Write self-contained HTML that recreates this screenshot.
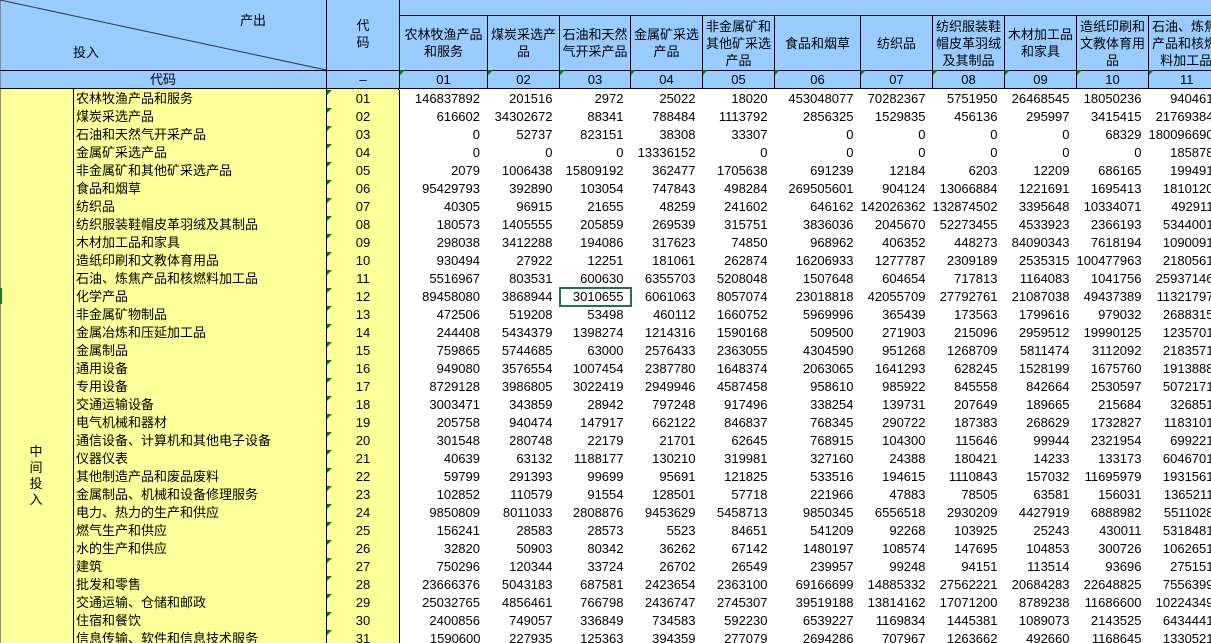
<!DOCTYPE html>
<html><head><meta charset="utf-8"><style>
html,body{margin:0;padding:0;width:1211px;height:643px;overflow:hidden;background:#fff;position:relative;font-family:"Liberation Sans","Noto Sans CJK SC",sans-serif;font-size:13px;color:#000}
.a{position:absolute;box-sizing:border-box}
.hd{background:#99ccff}
.hc{position:absolute;top:16px;height:54px;display:flex;align-items:center;justify-content:center;text-align:center;line-height:17px;border-left:1px solid #000;box-sizing:border-box;overflow:hidden;white-space:nowrap}
.cc{position:absolute;top:70px;height:19px;line-height:19px;text-align:center;border-left:1px solid #000;box-sizing:border-box}
.tri{position:absolute;left:0;top:0;width:0;height:0;border-top:5px solid #0a7a0a;border-right:5px solid transparent}
.clip{position:absolute;left:73px;top:90px;width:1138px;height:553px;overflow:hidden}
table{position:absolute;left:0;top:0;width:1147px;border-collapse:collapse;table-layout:fixed}
td{height:18px;padding:0;white-space:nowrap;overflow:hidden;line-height:18px}
td.n{background:#ffff99;padding-left:2px;border-left:1px solid #000}
td.c{background:#ffff99;text-align:center;border-left:1px solid #000;border-right:1px solid #000;position:relative}
td.d{text-align:right;padding-right:7px}
</style></head><body>
<div class="a hd" style="left:0;top:0;width:1211px;height:89px"></div>
<div class="a" style="left:0;top:0;width:1px;height:643px;background:#888"></div>
<svg class="a" style="left:0;top:0" width="330" height="72"><line x1="0" y1="0" x2="326" y2="70" stroke="#333" stroke-width="1"/></svg>
<div class="a" style="left:240px;top:10px">产出</div>
<div class="a" style="left:73px;top:42px">投入</div>
<div class="a" style="left:326px;top:0;width:73px;height:70px;border-left:1px solid #000;text-align:center;padding-top:17px;line-height:17px">代<br>码</div>
<div class="a" style="left:399px;top:0;width:812px;height:16px;border-left:1px solid #000;border-bottom:1px solid #000"></div>
<div class="hc" style="left:399px;width:88px">农林牧渔产品<br>和服务</div>
<div class="hc" style="left:487px;width:72px">煤炭采选产<br>品</div>
<div class="hc" style="left:559px;width:71px">石油和天然<br>气开采产品</div>
<div class="hc" style="left:630px;width:72px">金属矿采选<br>产品</div>
<div class="hc" style="left:702px;width:72px">非金属矿和<br>其他矿采选<br>产品</div>
<div class="hc" style="left:774px;width:86px">食品和烟草</div>
<div class="hc" style="left:860px;width:72px">纺织品</div>
<div class="hc" style="left:932px;width:72px">纺织服装鞋<br>帽皮革羽绒<br>及其制品</div>
<div class="hc" style="left:1004px;width:72px">木材加工品<br>和家具</div>
<div class="hc" style="left:1076px;width:72px">造纸印刷和<br>文教体育用<br>品</div>
<div class="hc" style="left:1148px;width:63px;justify-content:flex-start;padding-left:3px">石油、炼焦<br>产品和核燃<br>&nbsp;料加工品</div>
<div class="a" style="left:0;top:70px;width:1211px;height:1px;background:#000"></div>
<div class="a" style="left:0;top:88px;width:1211px;height:1px;background:#000"></div>
<div class="cc" style="left:0;width:326px;border-left:none">代码</div>
<div class="cc" style="left:326px;width:73px">–</div>
<div class="cc" style="left:399px;width:88px"><span class="tri"></span>01</div>
<div class="cc" style="left:487px;width:72px"><span class="tri"></span>02</div>
<div class="cc" style="left:559px;width:71px"><span class="tri"></span>03</div>
<div class="cc" style="left:630px;width:72px"><span class="tri"></span>04</div>
<div class="cc" style="left:702px;width:72px"><span class="tri"></span>05</div>
<div class="cc" style="left:774px;width:86px"><span class="tri"></span>06</div>
<div class="cc" style="left:860px;width:72px"><span class="tri"></span>07</div>
<div class="cc" style="left:932px;width:72px"><span class="tri"></span>08</div>
<div class="cc" style="left:1004px;width:72px"><span class="tri"></span>09</div>
<div class="cc" style="left:1076px;width:72px"><span class="tri"></span>10</div>
<div class="cc" style="left:1148px;width:63px;text-align:left;padding-left:31px"><span class="tri"></span>11</div>
<div class="a" style="left:1px;top:89px;width:72px;height:554px;background:#ffff99"></div>
<div class="a" style="left:73px;top:89px;width:326px;height:1px;background:#ffff99;border-left:1px solid #000;border-right:1px solid #000"></div>
<div class="a" style="left:326px;top:89px;width:1px;height:1px;background:#000"></div>
<div class="a" style="left:26px;top:444px;width:20px;text-align:center;line-height:16px">中<br>间<br>投<br>入</div>
<div class="a" style="left:0;top:288px;width:2px;height:16px;background:#1a7a2a"></div>
<div class="clip">
<table>
<colgroup><col style="width:253px"><col style="width:73px"><col style="width:88px"><col style="width:72px"><col style="width:71px"><col style="width:72px"><col style="width:72px"><col style="width:86px"><col style="width:72px"><col style="width:72px"><col style="width:72px"><col style="width:72px"><col style="width:72px"></colgroup>
<tr><td class="n">农林牧渔产品和服务</td><td class="c"><span class="tri"></span>01</td><td class="d">146837892</td><td class="d">201516</td><td class="d">2972</td><td class="d">25022</td><td class="d">18020</td><td class="d">453048077</td><td class="d">70282367</td><td class="d">5751950</td><td class="d">26468545</td><td class="d">18050236</td><td class="d">940461</td></tr>
<tr><td class="n">煤炭采选产品</td><td class="c"><span class="tri"></span>02</td><td class="d">616602</td><td class="d">34302672</td><td class="d">88341</td><td class="d">788484</td><td class="d">1113792</td><td class="d">2856325</td><td class="d">1529835</td><td class="d">456136</td><td class="d">295997</td><td class="d">3415415</td><td class="d">21769384</td></tr>
<tr><td class="n">石油和天然气开采产品</td><td class="c"><span class="tri"></span>03</td><td class="d">0</td><td class="d">52737</td><td class="d">823151</td><td class="d">38308</td><td class="d">33307</td><td class="d">0</td><td class="d">0</td><td class="d">0</td><td class="d">0</td><td class="d">68329</td><td class="d">180096690</td></tr>
<tr><td class="n">金属矿采选产品</td><td class="c"><span class="tri"></span>04</td><td class="d">0</td><td class="d">0</td><td class="d">0</td><td class="d">13336152</td><td class="d">0</td><td class="d">0</td><td class="d">0</td><td class="d">0</td><td class="d">0</td><td class="d">0</td><td class="d">185878</td></tr>
<tr><td class="n">非金属矿和其他矿采选产品</td><td class="c"><span class="tri"></span>05</td><td class="d">2079</td><td class="d">1006438</td><td class="d">15809192</td><td class="d">362477</td><td class="d">1705638</td><td class="d">691239</td><td class="d">12184</td><td class="d">6203</td><td class="d">12209</td><td class="d">686165</td><td class="d">199491</td></tr>
<tr><td class="n">食品和烟草</td><td class="c"><span class="tri"></span>06</td><td class="d">95429793</td><td class="d">392890</td><td class="d">103054</td><td class="d">747843</td><td class="d">498284</td><td class="d">269505601</td><td class="d">904124</td><td class="d">13066884</td><td class="d">1221691</td><td class="d">1695413</td><td class="d">1810120</td></tr>
<tr><td class="n">纺织品</td><td class="c"><span class="tri"></span>07</td><td class="d">40305</td><td class="d">96915</td><td class="d">21655</td><td class="d">48259</td><td class="d">241602</td><td class="d">646162</td><td class="d">142026362</td><td class="d">132874502</td><td class="d">3395648</td><td class="d">10334071</td><td class="d">492911</td></tr>
<tr><td class="n">纺织服装鞋帽皮革羽绒及其制品</td><td class="c"><span class="tri"></span>08</td><td class="d">180573</td><td class="d">1405555</td><td class="d">205859</td><td class="d">269539</td><td class="d">315751</td><td class="d">3836036</td><td class="d">2045670</td><td class="d">52273455</td><td class="d">4533923</td><td class="d">2366193</td><td class="d">5344001</td></tr>
<tr><td class="n">木材加工品和家具</td><td class="c"><span class="tri"></span>09</td><td class="d">298038</td><td class="d">3412288</td><td class="d">194086</td><td class="d">317623</td><td class="d">74850</td><td class="d">968962</td><td class="d">406352</td><td class="d">448273</td><td class="d">84090343</td><td class="d">7618194</td><td class="d">1090091</td></tr>
<tr><td class="n">造纸印刷和文教体育用品</td><td class="c"><span class="tri"></span>10</td><td class="d">930494</td><td class="d">27922</td><td class="d">12251</td><td class="d">181061</td><td class="d">262874</td><td class="d">16206933</td><td class="d">1277787</td><td class="d">2309189</td><td class="d">2535315</td><td class="d">100477963</td><td class="d">2180561</td></tr>
<tr><td class="n">石油、炼焦产品和核燃料加工品</td><td class="c"><span class="tri"></span>11</td><td class="d">5516967</td><td class="d">803531</td><td class="d">600630</td><td class="d">6355703</td><td class="d">5208048</td><td class="d">1507648</td><td class="d">604654</td><td class="d">717813</td><td class="d">1164083</td><td class="d">1041756</td><td class="d">25937146</td></tr>
<tr><td class="n">化学产品</td><td class="c"><span class="tri"></span>12</td><td class="d">89458080</td><td class="d">3868944</td><td class="d" style="outline:2px solid #217346;outline-offset:-1px">3010655</td><td class="d">6061063</td><td class="d">8057074</td><td class="d">23018818</td><td class="d">42055709</td><td class="d">27792761</td><td class="d">21087038</td><td class="d">49437389</td><td class="d">11321797</td></tr>
<tr><td class="n">非金属矿物制品</td><td class="c"><span class="tri"></span>13</td><td class="d">472506</td><td class="d">519208</td><td class="d">53498</td><td class="d">460112</td><td class="d">1660752</td><td class="d">5969996</td><td class="d">365439</td><td class="d">173563</td><td class="d">1799616</td><td class="d">979032</td><td class="d">2688315</td></tr>
<tr><td class="n">金属冶炼和压延加工品</td><td class="c"><span class="tri"></span>14</td><td class="d">244408</td><td class="d">5434379</td><td class="d">1398274</td><td class="d">1214316</td><td class="d">1590168</td><td class="d">509500</td><td class="d">271903</td><td class="d">215096</td><td class="d">2959512</td><td class="d">19990125</td><td class="d">1235701</td></tr>
<tr><td class="n">金属制品</td><td class="c"><span class="tri"></span>15</td><td class="d">759865</td><td class="d">5744685</td><td class="d">63000</td><td class="d">2576433</td><td class="d">2363055</td><td class="d">4304590</td><td class="d">951268</td><td class="d">1268709</td><td class="d">5811474</td><td class="d">3112092</td><td class="d">2183571</td></tr>
<tr><td class="n">通用设备</td><td class="c"><span class="tri"></span>16</td><td class="d">949080</td><td class="d">3576554</td><td class="d">1007454</td><td class="d">2387780</td><td class="d">1648374</td><td class="d">2063065</td><td class="d">1641293</td><td class="d">628245</td><td class="d">1528199</td><td class="d">1675760</td><td class="d">1913888</td></tr>
<tr><td class="n">专用设备</td><td class="c"><span class="tri"></span>17</td><td class="d">8729128</td><td class="d">3986805</td><td class="d">3022419</td><td class="d">2949946</td><td class="d">4587458</td><td class="d">958610</td><td class="d">985922</td><td class="d">845558</td><td class="d">842664</td><td class="d">2530597</td><td class="d">5072171</td></tr>
<tr><td class="n">交通运输设备</td><td class="c"><span class="tri"></span>18</td><td class="d">3003471</td><td class="d">343859</td><td class="d">28942</td><td class="d">797248</td><td class="d">917496</td><td class="d">338254</td><td class="d">139731</td><td class="d">207649</td><td class="d">189665</td><td class="d">215684</td><td class="d">326851</td></tr>
<tr><td class="n">电气机械和器材</td><td class="c"><span class="tri"></span>19</td><td class="d">205758</td><td class="d">940474</td><td class="d">147917</td><td class="d">662122</td><td class="d">846837</td><td class="d">768345</td><td class="d">290722</td><td class="d">187383</td><td class="d">268629</td><td class="d">1732827</td><td class="d">1183101</td></tr>
<tr><td class="n">通信设备、计算机和其他电子设备</td><td class="c"><span class="tri"></span>20</td><td class="d">301548</td><td class="d">280748</td><td class="d">22179</td><td class="d">21701</td><td class="d">62645</td><td class="d">768915</td><td class="d">104300</td><td class="d">115646</td><td class="d">99944</td><td class="d">2321954</td><td class="d">699221</td></tr>
<tr><td class="n">仪器仪表</td><td class="c"><span class="tri"></span>21</td><td class="d">40639</td><td class="d">63132</td><td class="d">1188177</td><td class="d">130210</td><td class="d">319981</td><td class="d">327160</td><td class="d">24388</td><td class="d">180421</td><td class="d">14233</td><td class="d">133173</td><td class="d">6046701</td></tr>
<tr><td class="n">其他制造产品和废品废料</td><td class="c"><span class="tri"></span>22</td><td class="d">59799</td><td class="d">291393</td><td class="d">99699</td><td class="d">95691</td><td class="d">121825</td><td class="d">533516</td><td class="d">194615</td><td class="d">1110843</td><td class="d">157032</td><td class="d">11695979</td><td class="d">1931561</td></tr>
<tr><td class="n">金属制品、机械和设备修理服务</td><td class="c"><span class="tri"></span>23</td><td class="d">102852</td><td class="d">110579</td><td class="d">91554</td><td class="d">128501</td><td class="d">57718</td><td class="d">221966</td><td class="d">47883</td><td class="d">78505</td><td class="d">63581</td><td class="d">156031</td><td class="d">1365211</td></tr>
<tr><td class="n">电力、热力的生产和供应</td><td class="c"><span class="tri"></span>24</td><td class="d">9850809</td><td class="d">8011033</td><td class="d">2808876</td><td class="d">9453629</td><td class="d">5458713</td><td class="d">9850345</td><td class="d">6556518</td><td class="d">2930209</td><td class="d">4427919</td><td class="d">6888982</td><td class="d">5511028</td></tr>
<tr><td class="n">燃气生产和供应</td><td class="c"><span class="tri"></span>25</td><td class="d">156241</td><td class="d">28583</td><td class="d">28573</td><td class="d">5523</td><td class="d">84651</td><td class="d">541209</td><td class="d">92268</td><td class="d">103925</td><td class="d">25243</td><td class="d">430011</td><td class="d">5318481</td></tr>
<tr><td class="n">水的生产和供应</td><td class="c"><span class="tri"></span>26</td><td class="d">32820</td><td class="d">50903</td><td class="d">80342</td><td class="d">36262</td><td class="d">67142</td><td class="d">1480197</td><td class="d">108574</td><td class="d">147695</td><td class="d">104853</td><td class="d">300726</td><td class="d">1062651</td></tr>
<tr><td class="n">建筑</td><td class="c"><span class="tri"></span>27</td><td class="d">750296</td><td class="d">120344</td><td class="d">33724</td><td class="d">26702</td><td class="d">26549</td><td class="d">239957</td><td class="d">99248</td><td class="d">94151</td><td class="d">113514</td><td class="d">93696</td><td class="d">275151</td></tr>
<tr><td class="n">批发和零售</td><td class="c"><span class="tri"></span>28</td><td class="d">23666376</td><td class="d">5043183</td><td class="d">687581</td><td class="d">2423654</td><td class="d">2363100</td><td class="d">69166699</td><td class="d">14885332</td><td class="d">27562221</td><td class="d">20684283</td><td class="d">22648825</td><td class="d">7556399</td></tr>
<tr><td class="n">交通运输、仓储和邮政</td><td class="c"><span class="tri"></span>29</td><td class="d">25032765</td><td class="d">4856461</td><td class="d">766798</td><td class="d">2436747</td><td class="d">2745307</td><td class="d">39519188</td><td class="d">13814162</td><td class="d">17071200</td><td class="d">8789238</td><td class="d">11686600</td><td class="d">10224349</td></tr>
<tr><td class="n">住宿和餐饮</td><td class="c"><span class="tri"></span>30</td><td class="d">2400856</td><td class="d">749057</td><td class="d">336849</td><td class="d">734583</td><td class="d">592230</td><td class="d">6539227</td><td class="d">1169834</td><td class="d">1445381</td><td class="d">1089073</td><td class="d">2143525</td><td class="d">6434441</td></tr>
<tr><td class="n">信息传输、软件和信息技术服务</td><td class="c"><span class="tri"></span>31</td><td class="d">1590600</td><td class="d">227935</td><td class="d">125363</td><td class="d">394359</td><td class="d">277079</td><td class="d">2694286</td><td class="d">707967</td><td class="d">1263662</td><td class="d">492660</td><td class="d">1168645</td><td class="d">1330521</td></tr>
</table>
</div>
</body></html>
